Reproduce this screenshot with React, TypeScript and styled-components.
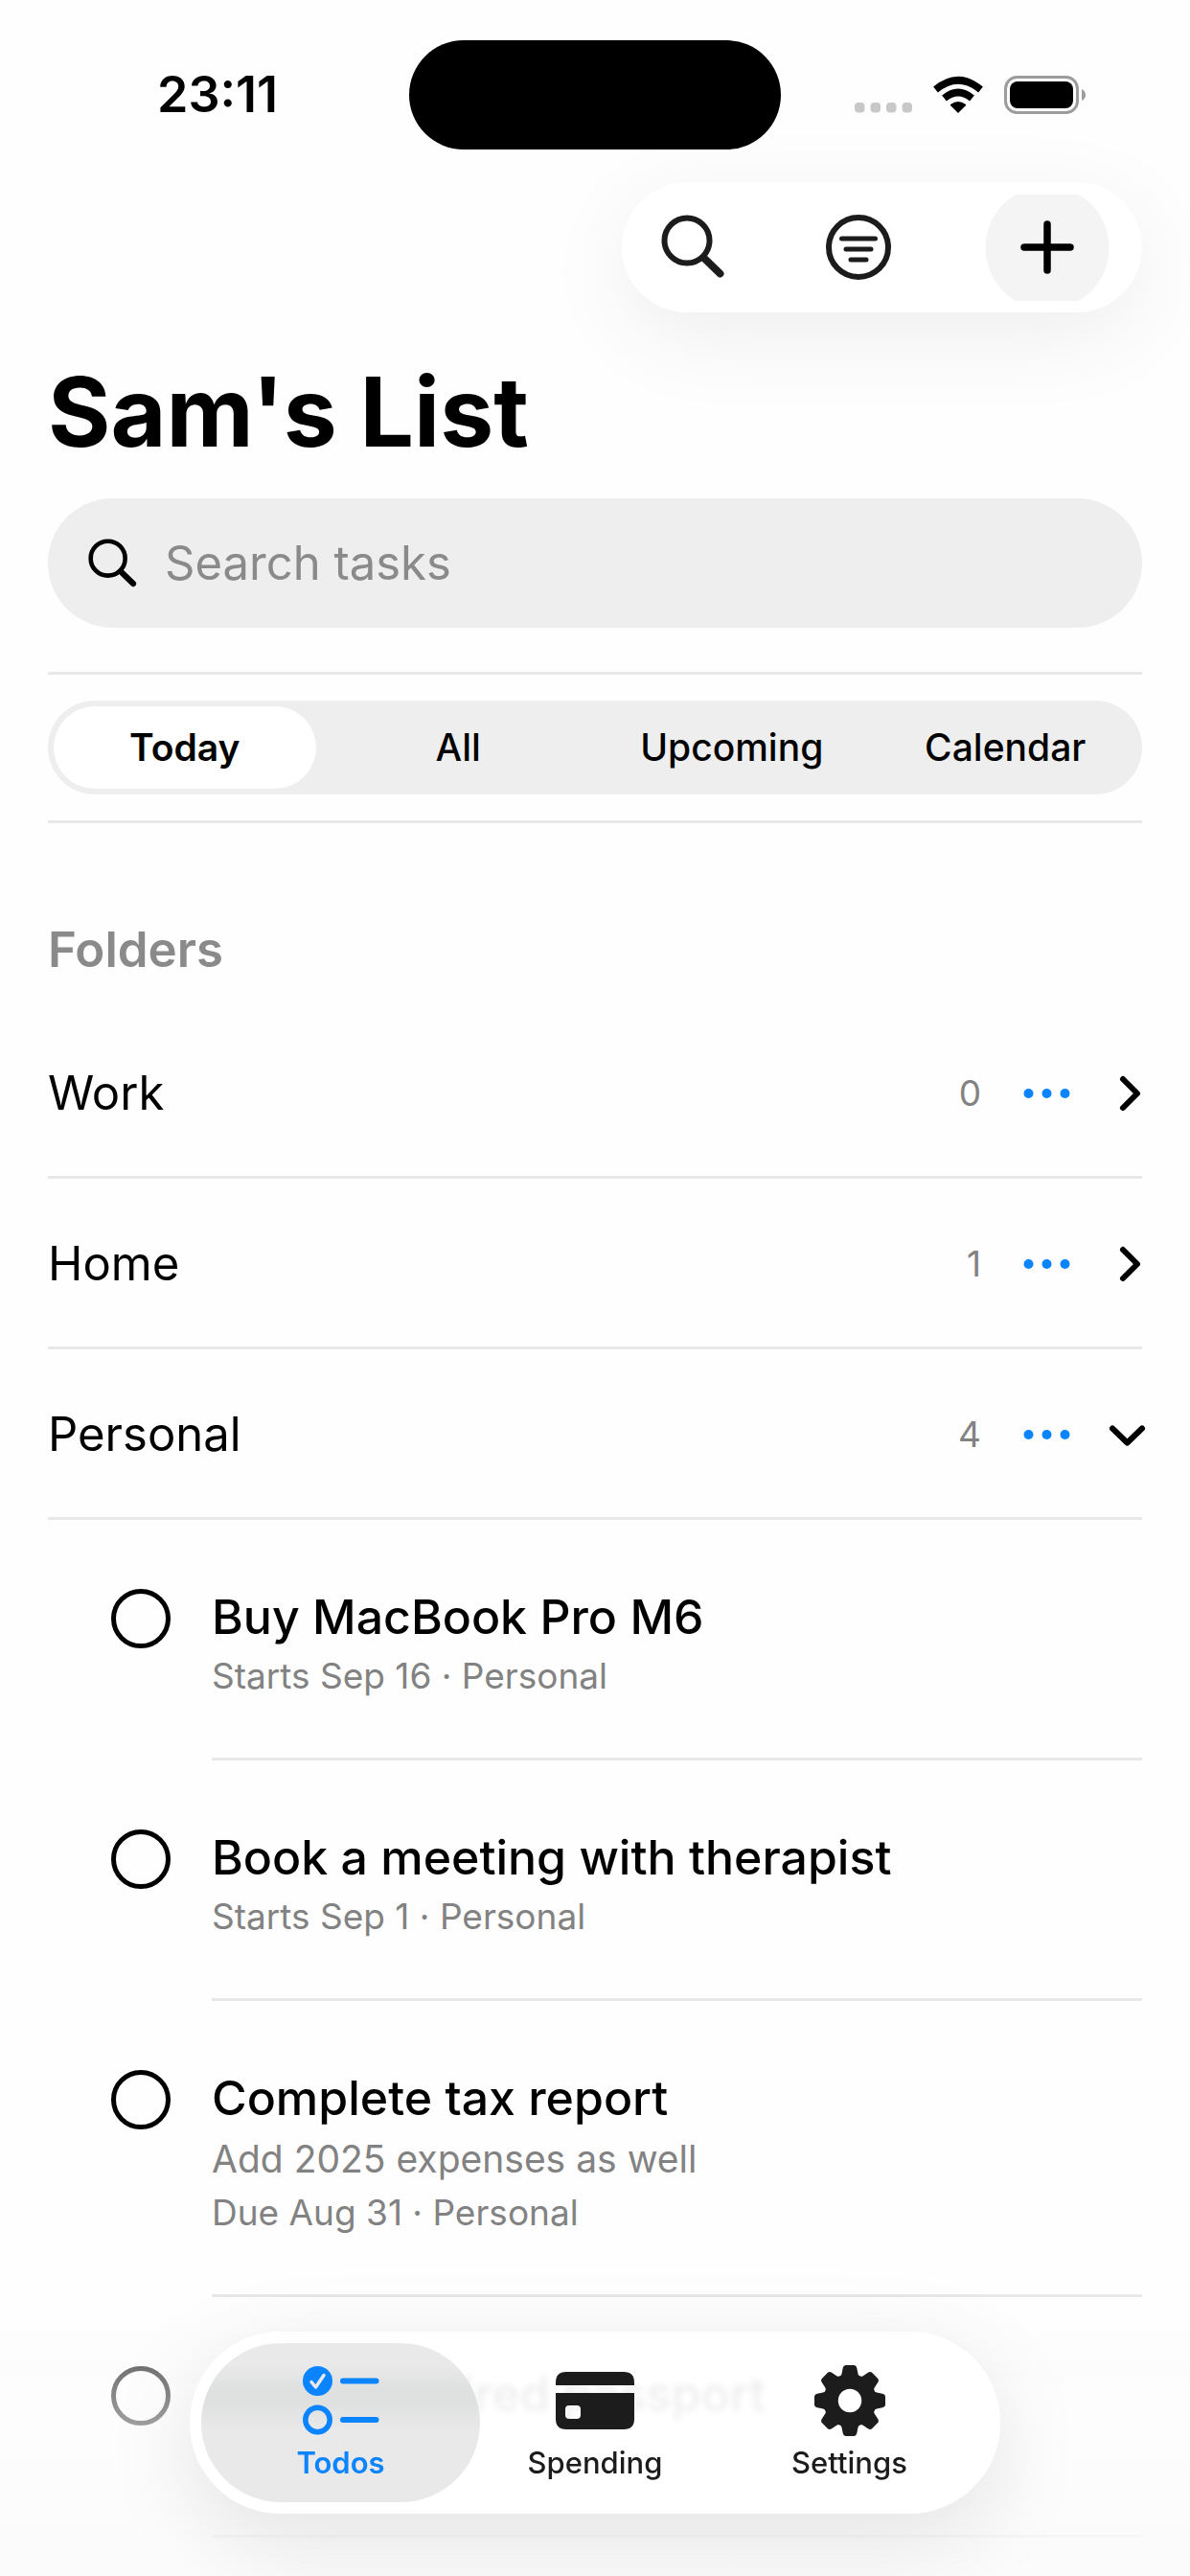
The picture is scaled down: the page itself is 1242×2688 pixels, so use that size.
import { useState } from "react";
import styled, { createGlobalStyle } from "styled-components";

const GlobalStyle = createGlobalStyle`
  * {
    box-sizing: border-box;
  }

  body {
    margin: 0;
    background: #fefefe;
    color: #000;
    font-family: Inter, Roboto, "Liberation Sans", sans-serif;
  }

  button {
    padding: 0;
    border: none;
    background: none;
    color: inherit;
    font: inherit;
    cursor: pointer;
  }

  svg {
    display: block;
    overflow: visible;
  }
`;

const Screen = styled.div`
  min-height: 100vh;
`;

const StatusBar = styled.div`
  display: grid;
  grid-template-columns: 1fr auto 1fr;
  align-items: center;
  padding-top: 42px;
`;

const Clock = styled.time`
  padding-left: 164px;
  font-size: 52px;
  line-height: 62px;
  font-weight: 600;
`;

const Island = styled.div`
  width: 388px;
  height: 114px;
  border-radius: 57px;
  background: #000;
`;

const Indicators = styled.div`
  display: flex;
  align-items: center;
  justify-content: flex-end;
  gap: 22px;
  padding-right: 109px;
`;

const Header = styled.header`
  display: flex;
  justify-content: flex-end;
  padding: 34px 50px 0;
`;

const Toolbar = styled.div`
  display: flex;
  align-items: center;
  justify-content: space-between;
  width: 543px;
  height: 136px;
  padding: 0 34px 0 41px;
  border-radius: 68px;
  background: #fff;
  box-shadow: 0 24px 96px rgba(0, 0, 0, 0.065);
  color: #1c1c1c;
`;

const SearchButton = styled.button`
  padding-right: 6px;
`;

const AddButton = styled.button`
  display: flex;
  align-items: center;
  justify-content: center;
  width: 130px;
  height: 111px;
  background: radial-gradient(circle, #f4f4f4 64px, transparent 65px);
  color: #000;
`;

const Main = styled.main`
  padding: 44px 50px 0;
`;

const Title = styled.h1`
  margin: 0 0 30px;
  font-size: 100px;
  line-height: 120px;
  font-weight: 700;
`;

const SearchField = styled.label`
  display: flex;
  align-items: center;
  gap: 28px;
  height: 135px;
  margin-bottom: 46px;
  padding: 0 42px;
  border-radius: 68px;
  background: #eee;

  input {
    flex: 1;
    min-width: 0;
    padding: 0;
    border: none;
    outline: none;
    background: none;
    font: inherit;
    font-size: 49px;
    line-height: 62px;
  }

  input::placeholder {
    color: #8a8a8a;
    opacity: 1;
  }
`;

const FilterBar = styled.div`
  padding: 27px 0;
  border-top: 3px solid #e8e8e8;
  border-bottom: 3px solid #e8e8e8;
`;

const Segments = styled.div`
  display: grid;
  grid-template-columns: repeat(4, 1fr);
  gap: 12px;
  height: 98px;
  padding: 6px;
  border-radius: 49px;
  background: #eee;
`;

const Segment = styled.button<{ $active: boolean }>`
  border-radius: 43px;
  background: ${({ $active }) => ($active ? "#fff" : "transparent")};
  font-size: 39px;
  line-height: 46px;
  font-weight: ${({ $active }) => ($active ? 600 : 500)};
`;

const SectionTitle = styled.h2`
  margin: 101px 0 30px;
  color: #8a8a8a;
  font-size: 51px;
  line-height: 62px;
  font-weight: 600;
`;

const List = styled.ul`
  margin: 0;
  padding: 0;
  list-style: none;
`;

const FolderRow = styled.div`
  display: flex;
  align-items: center;
  gap: 40px;
  height: 178px;
  padding-top: 3px;
  border-bottom: 3px solid #e8e8e8;
`;

const FolderName = styled.span`
  flex: 1;
  font-size: 49px;
  line-height: 62px;
`;

const Count = styled.span`
  color: #828282;
  font-size: 37px;
  line-height: 46px;
`;

const Task = styled.li`
  display: flex;
  gap: 43px;
  padding-left: 66px;
`;

const Check = styled.input`
  flex: none;
  appearance: none;
  width: 62px;
  height: 62px;
  margin: 72px 0 0;
  border: 5px solid #000;
  border-radius: 50%;

  &:checked {
    background: #0a84ff;
  }
`;

const TaskBody = styled.label`
  flex: 1;
  display: flex;
  flex-direction: column;
  gap: 8px;
  min-height: 251px;
  padding: 70px 0 62px;
  border-bottom: 3px solid #e8e8e8;
`;

const TaskName = styled.span`
  font-size: 50px;
  line-height: 62px;
  font-weight: 500;
`;

const TaskNote = styled.span`
  color: #828282;
  font-size: 39px;
  line-height: 50px;
`;

const TaskMeta = styled.span`
  color: #828282;
  font-size: 37px;
  line-height: 46px;
`;

const BottomFade = styled.div`
  position: fixed;
  right: 0;
  bottom: 0;
  left: 0;
  height: 284px;
  background: linear-gradient(
    rgba(253, 253, 253, 0),
    rgba(252, 252, 252, 0.46) 24%,
    rgba(252, 252, 252, 0.68) 50%,
    rgba(250, 250, 250, 0.8)
  );
  pointer-events: none;
`;

const TabBar = styled.nav`
  position: fixed;
  bottom: 65px;
  left: 50%;
  display: grid;
  grid-template-columns: 291fr 240fr 291fr;
  width: min(846px, 100%);
  height: 190px;
  padding: 12px;
  border-radius: 95px;
  background: rgba(255, 255, 255, 0.86);
  box-shadow: 0 24px 96px rgba(0, 0, 0, 0.1);
  backdrop-filter: blur(3px);
  transform: translateX(-50%);
`;

const Tab = styled.button<{ $active: boolean }>`
  display: flex;
  flex-direction: column;
  align-items: center;
  justify-content: center;
  gap: 8px;
  border-radius: 83px;
  background: ${({ $active }) =>
    $active
      ? "linear-gradient(#e9e9e9 14%, #dfe1e0 28%, #dfe1e0 38%, #e9e9e9 54%)"
      : "transparent"};
  color: ${({ $active }) => ($active ? "#0a84ff" : "#1c1c1c")};
  font-size: 31px;
  line-height: 38px;
  font-weight: ${({ $active }) => ($active ? 600 : 500)};
`;

const SearchIcon = ({ size = 68, weight = 6 }) => (
  <svg width={size} height={size} viewBox="0 0 68 68" fill="none">
    <circle cx="27" cy="27" r="23.5" stroke="currentColor" strokeWidth={weight} />
    <path
      d="M45 45.5 61.5 61.5"
      stroke="currentColor"
      strokeWidth={weight + 2}
      strokeLinecap="round"
    />
  </svg>
);

const FilterIcon = () => (
  <svg width="68" height="68" viewBox="0 0 68 68" fill="none" stroke="currentColor" strokeLinecap="round">
    <circle cx="34" cy="34" r="31" strokeWidth="6" />
    <path d="M16.5 25h35M21 36h26M26 47h16" strokeWidth="5" />
  </svg>
);

const PlusIcon = () => (
  <svg width="56" height="56" viewBox="0 0 56 56" fill="none">
    <path
      d="M28 4v48M4 28h48"
      stroke="currentColor"
      strokeWidth="7.5"
      strokeLinecap="round"
    />
  </svg>
);

const SignalIcon = () => (
  <svg width="60" height="38" viewBox="0 0 60 38" fill="#c8c8ca">
    {[0, 16.5, 33, 49.5].map((x) => (
      <rect key={x} x={x} y="27" width="10.5" height="10.5" rx="4" />
    ))}
  </svg>
);

const WifiIcon = () => (
  <svg width="52" height="38" viewBox="0 0 52 38">
    <path d="M26 38 18 30Q17.5 29.3 18.3 28.7Q26 23.5 33.7 28.7Q34.5 29.3 34 30Z" />
    <path
      d="M11.5 22.5Q26 10.5 40.5 22.5M2.5 13.5Q26 -6 49.5 13.5"
      fill="none"
      stroke="#000"
      strokeWidth="7.5"
    />
  </svg>
);

const BatteryIcon = () => (
  <svg width="85" height="40" viewBox="0 0 85 40">
    <rect x="1.5" y="1.5" width="75" height="37" rx="12" fill="none" stroke="#9c9c9c" strokeWidth="3" />
    <rect x="6" y="6" width="66" height="28" rx="8" />
    <path d="M81 14Q85 16 85 20T81 26Z" fill="#9c9c9c" />
  </svg>
);

const DotsIcon = () => (
  <svg width="52" height="12" viewBox="0 0 52 12" fill="#0a84ff">
    <circle cx="9.5" cy="6" r="5" />
    <circle cx="28.5" cy="6" r="5" />
    <circle cx="47.5" cy="6" r="5" />
  </svg>
);

const Chevron = ({ open }: { open: boolean }) => (
  <svg width="36" height="36" viewBox="0 0 36 36" fill="none">
    <path
      d={open ? "M5 11.5 20.5 26.5 36 11.5" : "M16 3 31 18 16 33"}
      stroke="#000"
      strokeWidth="6"
      strokeLinecap="round"
      strokeLinejoin="round"
    />
  </svg>
);

const TodosIcon = () => (
  <svg width="80" height="76" viewBox="0 0 80 76" fill="none" stroke="currentColor" strokeLinecap="round">
    <circle cx="15.5" cy="17.5" r="15.5" fill="currentColor" stroke="none" />
    <path d="M9 18.5 13.5 24 22 11.5" stroke="#e9e9e9" strokeWidth="3.5" strokeLinejoin="round" />
    <circle cx="15.5" cy="58" r="12.7" strokeWidth="5.5" />
    <path d="M42 17.5h34.5M42 58h34.5" strokeWidth="6" />
  </svg>
);

const CardIcon = () => (
  <svg width="82" height="76" viewBox="0 0 82 76" fill="currentColor">
    <path d="M0 22V19Q0 8 11 8H71Q82 8 82 19V22Z" />
    <path
      fillRule="evenodd"
      d="M0 30H82V57Q82 68 71 68H11Q0 68 0 57ZM14 43Q10 43 10 47V53Q10 57 14 57H22Q26 57 26 53V47Q26 43 22 43Z"
    />
  </svg>
);

const GearIcon = () => (
  <svg width="76" height="76" viewBox="-38 -38 76 76" fill="currentColor">
    <circle r="20" fill="none" stroke="currentColor" strokeWidth="15.5" />
    {[0, 45, 90, 135, 180, 225, 270, 315].map((angle) => (
      <path
        key={angle}
        transform={`rotate(${angle})`}
        d="M-11 -24Q-9 -26 -8.5 -28L-7.3 -34Q-6.5 -37 -4 -37H4Q6.5 -37 7.3 -34L8.5 -28Q9 -26 11 -24Z"
      />
    ))}
  </svg>
);

const FILTERS = ["Today", "All", "Upcoming", "Calendar"];

const TABS = [
  { name: "Todos", icon: <TodosIcon /> },
  { name: "Spending", icon: <CardIcon /> },
  { name: "Settings", icon: <GearIcon /> },
];

type TaskItem = {
  name: string;
  note?: string;
  meta?: string;
};

type Folder = {
  name: string;
  count: number;
  tasks: TaskItem[];
};

const FOLDERS: Folder[] = [
  { name: "Work", count: 0, tasks: [] },
  { name: "Home", count: 1, tasks: [] },
  {
    name: "Personal",
    count: 4,
    tasks: [
      { name: "Buy MacBook Pro M6", meta: "Starts Sep 16 · Personal" },
      { name: "Book a meeting with therapist", meta: "Starts Sep 1 · Personal" },
      {
        name: "Complete tax report",
        note: "Add 2025 expenses as well",
        meta: "Due Aug 31 · Personal",
      },
      { name: "Renew expired passport" },
    ],
  },
];

function App() {
  const [filter, setFilter] = useState("Today");
  const [tab, setTab] = useState("Todos");
  const [openFolder, setOpenFolder] = useState("Personal");

  return (
    <Screen>
      <GlobalStyle />
      <StatusBar>
        <Clock>23:11</Clock>
        <Island />
        <Indicators>
          <SignalIcon />
          <WifiIcon />
          <BatteryIcon />
        </Indicators>
      </StatusBar>

      <Header>
        <Toolbar>
          <SearchButton aria-label="Search">
            <SearchIcon />
          </SearchButton>
          <button aria-label="Filter">
            <FilterIcon />
          </button>
          <AddButton aria-label="Add task">
            <PlusIcon />
          </AddButton>
        </Toolbar>
      </Header>

      <Main>
        <Title>Sam's List</Title>
        <SearchField>
          <SearchIcon size={52} />
          <input type="text" placeholder="Search tasks" aria-label="Search tasks" />
        </SearchField>

        <FilterBar>
          <Segments>
            {FILTERS.map((name) => (
              <Segment
                key={name}
                $active={name === filter}
                aria-pressed={name === filter}
                onClick={() => setFilter(name)}
              >
                {name}
              </Segment>
            ))}
          </Segments>
        </FilterBar>

        <SectionTitle>Folders</SectionTitle>
        <List>
          {FOLDERS.map((folder) => {
            const open = folder.name === openFolder;

            return (
              <li key={folder.name}>
                <FolderRow>
                  <FolderName>{folder.name}</FolderName>
                  <Count>{folder.count}</Count>
                  <button aria-label={`${folder.name} options`}>
                    <DotsIcon />
                  </button>
                  <button
                    aria-label={`Toggle ${folder.name}`}
                    aria-expanded={open}
                    onClick={() => setOpenFolder(open ? "" : folder.name)}
                  >
                    <Chevron open={open} />
                  </button>
                </FolderRow>
                {open && (
                  <List>
                    {folder.tasks.map((task, i) => (
                      <Task key={task.name}>
                        <Check type="checkbox" id={`task-${i}`} />
                        <TaskBody htmlFor={`task-${i}`}>
                          <TaskName>{task.name}</TaskName>
                          {task.note && <TaskNote>{task.note}</TaskNote>}
                          {task.meta && <TaskMeta>{task.meta}</TaskMeta>}
                        </TaskBody>
                      </Task>
                    ))}
                  </List>
                )}
              </li>
            );
          })}
        </List>
      </Main>

      <BottomFade />
      <TabBar>
        {TABS.map(({ name, icon }) => (
          <Tab key={name} $active={name === tab} onClick={() => setTab(name)}>
            {icon}
            {name}
          </Tab>
        ))}
      </TabBar>
    </Screen>
  );
}

export default App;
